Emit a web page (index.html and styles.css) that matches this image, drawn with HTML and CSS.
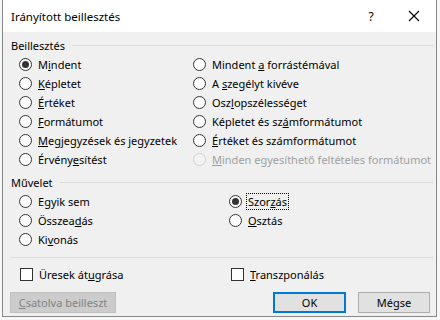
FILE: index.html
```html
<!DOCTYPE html>
<html lang="hu">
<head>
<meta charset="utf-8">
<link rel="stylesheet" href="styles.css">
</head>
<body>
<div class="dialog">
  <div class="titlebar">
    <span class="title">Irányított beillesztés</span>
    <span class="help">?</span>
    <span class="close"><svg width="12" height="12" viewBox="0 0 12 12"><path d="M1 1L11 11M11 1L1 11" stroke="#000" stroke-width="1.1" fill="none"/></svg></span>
  </div>
  <div class="content">
    <div class="group-head"><span>Beillesztés</span><span class="rule"></span></div>
    <div class="grid paste">
      <div class="opt"><span class="radio on"></span><span>M<u>i</u>ndent</span></div>
      <div class="opt"><span class="radio"></span><span>Mindent <u>a</u> forrástémával</span></div>
      <div class="opt"><span class="radio"></span><span><u>K</u>épletet</span></div>
      <div class="opt"><span class="radio"></span><span>A <u>s</u>zegélyt kivéve</span></div>
      <div class="opt"><span class="radio"></span><span><u>É</u>rtéket</span></div>
      <div class="opt"><span class="radio"></span><span>Osz<u>l</u>opszélességet</span></div>
      <div class="opt"><span class="radio"></span><span><u>F</u>ormátumot</span></div>
      <div class="opt"><span class="radio"></span><span>Képletet és sz<u>á</u>mformátumot</span></div>
      <div class="opt"><span class="radio"></span><span><u>M</u>egjegyzések és jegyzetek</span></div>
      <div class="opt"><span class="radio"></span><span><u>É</u>rtéket és számformátumot</span></div>
      <div class="opt"><span class="radio"></span><span>Érvény<u>e</u>sítést</span></div>
      <div class="opt disabled"><span class="radio"></span><span><u>M</u>inden egyesíthető feltételes formátumot</span></div>
    </div>
    <div class="group-head"><span>Művelet</span><span class="rule"></span></div>
    <div class="grid ops">
      <div class="opt"><span class="radio"></span><span>E<u>g</u>yik sem</span></div>
      <div class="opt"><span class="radio on"></span><span class="focus">Szor<u>z</u>ás</span></div>
      <div class="opt"><span class="radio"></span><span>Összea<u>d</u>ás</span></div>
      <div class="opt"><span class="radio"></span><span><u>O</u>sztás</span></div>
      <div class="opt"><span class="radio"></span><span>Ki<u>v</u>onás</span></div>
      <div class="opt"></div>
    </div>
    <div class="sep"></div>
    <div class="grid checks">
      <div class="opt"><span class="check"></span><span>Üresek át<u>u</u>grása</span></div>
      <div class="opt"><span class="check"></span><span><u>T</u>ranszponálás</span></div>
    </div>
    <div class="buttons">
      <button class="btn disabled"><u>C</u>satolva beilleszt</button>
      <span class="spacer"></span>
      <button class="btn default">OK</button>
      <button class="btn">Mégse</button>
    </div>
  </div>
</div>
</body>
</html>
```
FILE: styles.css
```css
* { box-sizing: border-box; }
html, body { margin: 0; padding: 0; }
body {
  width: 440px;
  height: 320px;
  background: #f7f7f7;
  font-family: "Noto Sans", "Open Sans", sans-serif;
  font-size: 11px;
  color: #000;
  overflow: hidden;
}
.dialog {
  margin-left: 2px;
  width: 435px;
  height: 317px;
  background: #f0f0f0;
  border: 1px solid #888;
  border-top: none;
  display: flex;
  flex-direction: column;
}
.titlebar {
  height: 32px;
  background: #fff;
  display: flex;
  align-items: center;
  padding-left: 8px;
}
.title { flex: 1; font-size: 11.5px; }
.help { width: 14px; text-align: center; margin-right: 30px; font-size: 12px; }
.close { width: 12px; height: 12px; margin-right: 16px; display: flex; }
.content {
  padding: 0 3px 0 0;
  display: flex;
  flex-direction: column;
}
.group-head {
  height: 19px;
  margin-top: 4px;
  padding-left: 8px;
  display: flex;
  align-items: center;
}
.group-head .rule {
  flex: 1;
  height: 1px;
  background: #dcdcdc;
  margin-left: 7px;
}
.grid {
  display: grid;
  padding-left: 16px;
}
.paste { grid-template-columns: 174px 1fr; }
.ops { grid-template-columns: 210px 1fr; }
.checks { grid-template-columns: 211px 1fr; padding-left: 17px; margin-top: 7px; }
.opt {
  height: 19px;
  display: flex;
  align-items: center;
  white-space: nowrap;
}
.radio {
  width: 13px;
  height: 13px;
  border-radius: 50%;
  border: 1px solid #333;
  background: #fff;
  margin-right: 6px;
  display: flex;
  align-items: center;
  justify-content: center;
  flex: none;
}
.radio.on::after {
  content: "";
  width: 7px;
  height: 7px;
  border-radius: 50%;
  background: #333;
}
.disabled .radio { border-color: #cfcfcf; background: #f3f3f3; }
.opt.disabled { color: #a0a0a0; }
.focus { outline: 1px dotted #000; outline-offset: 0; padding: 0 1px; margin-left: -1px; }
.check {
  width: 13px;
  height: 13px;
  border: 1px solid #333;
  background: #fff;
  margin-right: 6px;
  flex: none;
}
.sep {
  height: 1px;
  background: #dcdcdc;
  margin: 8px 0 0 8px;
}
.buttons {
  display: flex;
  margin-top: 8px;
  padding-left: 7px;
  padding-right: 3px;
}
.spacer { flex: 1; }
.btn {
  height: 21px;
  font: inherit;
  color: #000;
  background: #e1e1e1;
  border: 1px solid #adadad;
  padding: 0;
}
.btn.disabled { width: 106px; color: #838383; background: #cccccc; border-color: #bfbfbf; }
.btn.default { width: 73px; border: 2px solid #0078d7; margin-right: 12px; }
.btn + .btn:last-child { width: 72px; }
```
